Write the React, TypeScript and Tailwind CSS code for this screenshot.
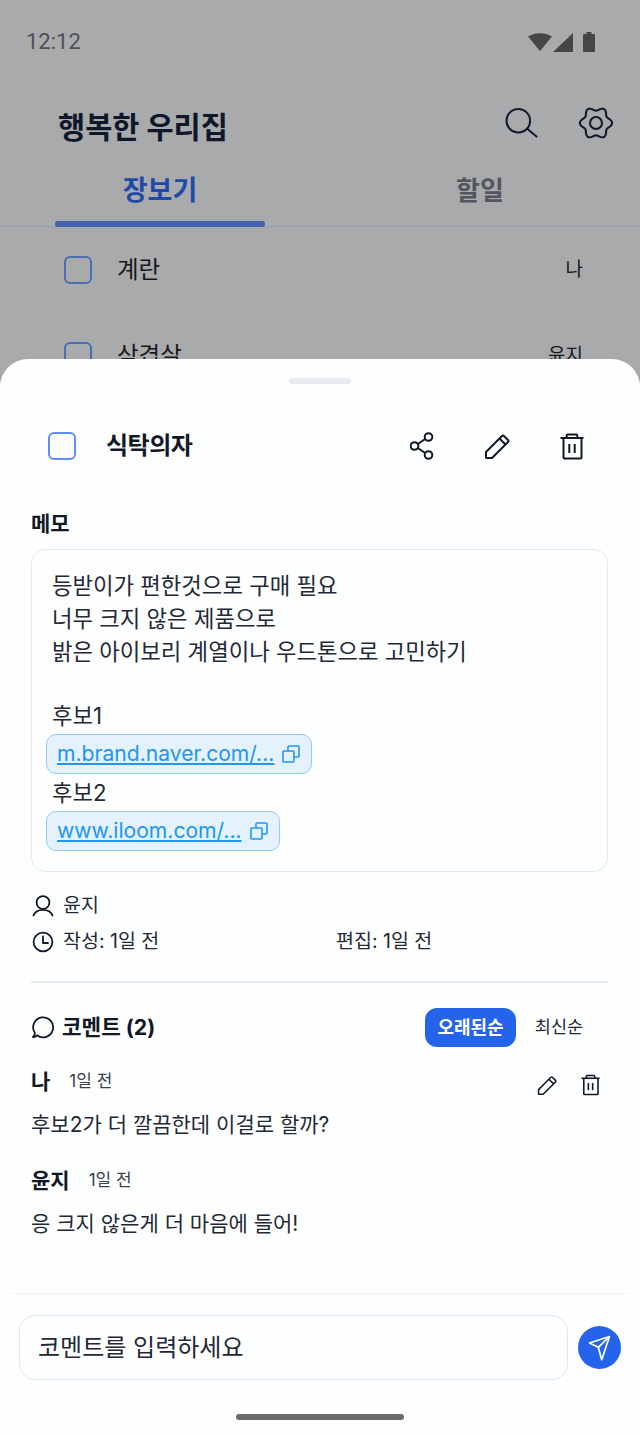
const font = "font-['Inter','Noto_Sans_CJK_KR',sans-serif]";

// six lobed outline of the settings gear
const gearPath = (() => {
  const pts: string[] = [];
  for (let i = 0; i < 96; i++) {
    const t = (i / 96) * Math.PI * 2;
    const r = 14.2 + 1.9 * Math.cos(6 * t);
    pts.push(`${(18 + r * Math.cos(t)).toFixed(2)} ${(18 + r * Math.sin(t)).toFixed(2)}`);
  }
  return `M${pts.join("L")}Z`;
})();

function SearchIcon() {
  return (
    <svg width="34" height="34" viewBox="0 0 34 34" fill="none" stroke="#0f172a" strokeWidth="2" strokeLinecap="round">
      <circle cx="13.3" cy="14.7" r="11.8" />
      <path d="M22.5 23 L31.5 30.5" />
    </svg>
  );
}

function GearIcon() {
  return (
    <svg width="36" height="36" viewBox="0 0 36 36" fill="none" stroke="#0f172a" strokeWidth="2">
      <path d={gearPath} strokeLinejoin="round" />
      <circle cx="18" cy="18" r="6" />
    </svg>
  );
}

function ShareIcon() {
  return (
    <svg width="24" height="28" viewBox="0 0 24 28" fill="none" stroke="#111827" strokeWidth="2">
      <circle cx="18.5" cy="5" r="3.8" />
      <circle cx="4.5" cy="14" r="3.8" />
      <circle cx="18.5" cy="23" r="3.8" />
      <path d="M7.8 12 L15.2 7 M7.8 16 L15.2 21" />
    </svg>
  );
}

function PencilIcon({ size = 26 }: { size?: number }) {
  return (
    <svg width={size} height={size} viewBox="0 0 26 26" fill="none" stroke="#111827" strokeWidth="2" strokeLinejoin="round">
      <path d="M2 25 V19 L18 3 Q19 2 20 3 L24 7 Q25 8 24 9 L8 25 Z" />
      <path d="M15.5 5.5 L21.5 11.5" />
    </svg>
  );
}

function TrashIcon({ width = 24, height = 27 }: { width?: number; height?: number }) {
  return (
    <svg width={width} height={height} viewBox="0 0 24 27" fill="none" stroke="#111827" strokeWidth="2">
      <path d="M0.5 5 H23.5" />
      <path d="M6.7 5 V2.5 Q6.7 1.5 7.7 1.5 H16.3 Q17.3 1.5 17.3 2.5 V5" />
      <path d="M3.5 5 V24.5 Q3.5 25.5 4.5 25.5 H20.5 Q21.5 25.5 21.5 24.5 V5" />
      <path d="M9.3 11 V20 M14.7 11 V20" />
    </svg>
  );
}

function CopyIcon() {
  return (
    <svg width="18" height="18" viewBox="0 0 18 18" fill="none" stroke="#2196f3" strokeWidth="1.6">
      <rect x="1" y="6" width="11" height="11" rx="1" />
      <path d="M6 6 V2 Q6 1 7 1 H16 Q17 1 17 2 V11 Q17 12 16 12 H12" />
    </svg>
  );
}

function UserIcon() {
  return (
    <svg width="22" height="22" viewBox="0 0 22 22" fill="none" stroke="#111827" strokeWidth="1.8" strokeLinecap="round">
      <circle cx="11" cy="7.5" r="6.4" />
      <path d="M1.5 20.5 C3 16.5 7 14.8 11 14.8 S19 16.5 20.5 20.5" />
    </svg>
  );
}

function ClockIcon() {
  return (
    <svg width="22" height="22" viewBox="0 0 22 22" fill="none" stroke="#111827" strokeWidth="1.8" strokeLinecap="round" strokeLinejoin="round">
      <circle cx="11" cy="11" r="9.4" />
      <path d="M11 5.5 V12 H16" />
    </svg>
  );
}

function ChatIcon() {
  return (
    <svg width="24" height="24" viewBox="0 0 24 24" fill="none" stroke="#111827" strokeWidth="1.8" strokeLinejoin="round">
      <path d="M6 20.2 A10 10 0 1 0 3.8 17.8 Q4 20 2 22 Q5 22.5 6 20.2 Z" />
    </svg>
  );
}

function SendIcon() {
  return (
    <svg width="26" height="28" viewBox="0 0 26 28" fill="none" stroke="#fff" strokeWidth="1.7" strokeLinejoin="round">
      <path d="M22.5 2.5 L2.5 9 L11.3 13.3 L14.7 25.7 Z" />
      <path d="M11.3 13.3 L22.5 2.5" />
    </svg>
  );
}

function LinkChip({ text }: { text: string }) {
  return (
    <div className="flex w-fit h-[40px] items-center gap-[8px] rounded-[10px] border-[1.5px] border-[#90caf9] bg-[#e3f2fd] pl-[10px] pr-[11px] -ml-[6px]">
      <span className="text-[21.1px] leading-[28px] text-[#2196f3] underline underline-offset-2">{text}</span>
      <CopyIcon />
    </div>
  );
}

function Comment({ name, text, actions }: { name: string; text: string; actions?: boolean }) {
  return (
    <div className="flex flex-col">
      <div className="flex items-center h-[28px]">
        <span className="text-[21px] font-semibold text-[#111827]">{name}</span>
        <span className="ml-[19px] text-[17px] text-[#374151]">1일 전</span>
        {actions && (
          <div className="ml-auto flex items-center gap-[24px] pr-[8px] mt-[6px] text-[#111827]">
            <PencilIcon size={20} />
            <TrashIcon width={19} height={22} />
          </div>
        )}
      </div>
      <p className="mt-[15px] text-[21px] leading-[28px] text-[#1f2937]">{text}</p>
    </div>
  );
}

export default function App() {
  return (
    <div className={`${font} relative w-[640px] h-[1436px] overflow-hidden bg-[#a9aaac] flex flex-col`}>
      {/* dimmed screen behind the sheet */}
      <div className="h-[359px] shrink-0 overflow-hidden">
        <div className="flex items-center justify-between h-[82px] pl-[26px] pr-[45px]">
          <span className="font-['Roboto',sans-serif] text-[22px] text-[#4f5052]">12:12</span>
          <div className="flex items-center mt-[2px]">
            <svg width="24" height="18" viewBox="0 0 24 18" fill="#454648"><path d="M0 3.5 C7 -1 17 -1 24 3.5 L12 18 Z" /></svg>
            <svg width="20" height="19" viewBox="0 0 20 19" fill="#454648" className="ml-[1px]"><path d="M20 0 V19 H0 Z" /></svg>
            <svg width="12" height="20" viewBox="0 0 12 20" fill="#454648" className="ml-[10px]"><path d="M3.5 0 H8.5 V2 H11 Q12 2 12 3 V19 Q12 20 11 20 H1 Q0 20 0 19 V3 Q0 2 1 2 H3.5 Z" /></svg>
          </div>
        </div>
        <div className="flex items-center justify-between h-[90px] pl-[58px] pr-[26px]">
          <h1 className="mt-[1px] text-[29.5px] font-bold text-[#0f172a]">행복한 우리집</h1>
          <div className="flex items-center gap-[39px] -mt-[8px]">
            <SearchIcon />
            <GearIcon />
          </div>
        </div>
        <div className="relative flex h-[55px] border-b border-[#9a9dab]">
          <div className="relative w-[320px] text-center">
            <span className="text-[27px] font-semibold leading-[38px] text-[#1e4bab]">장보기</span>
            <div className="absolute left-[55px] bottom-[-1px] w-[210px] h-[6px] rounded-full bg-[#4263ab]" />
          </div>
          <div className="w-[320px] text-center">
            <span className="text-[26px] font-semibold leading-[38px] text-[#53565e]">할일</span>
          </div>
        </div>
        <div className="flex items-center h-[85px] pl-[64px] pr-[57px]">
          <div className="w-[28px] h-[28px] rounded-[6px] border-2 border-[#4a6db5]" />
          <span className="ml-[25px] text-[23.5px] text-[#17181c]">계란</span>
          <span className="ml-auto mt-[2px] text-[19px] text-[#17181c]">나</span>
        </div>
        <div className="flex items-center h-[87px] pl-[64px] pr-[57px]">
          <div className="w-[28px] h-[28px] rounded-[6px] border-2 border-[#4a6db5]" />
          <span className="ml-[25px] text-[23.5px] text-[#17181c]">삼겹살</span>
          <span className="ml-auto mt-[2px] text-[19px] text-[#17181c]">윤지</span>
        </div>
      </div>

      {/* bottom sheet */}
      <div className="flex-1 flex flex-col bg-[#fdfefe] rounded-t-[28px]">
        <div className="self-center mt-[19px] w-[62px] h-[6px] rounded-full bg-[#e5e9f0]" />
        <div className="flex items-center h-[56px] mt-[34px] pl-[48px] pr-[56px]">
          <div className="w-[28px] h-[28px] rounded-[6px] border-2 border-[#5f8ef5]" />
          <h2 className="ml-[30px] text-[24px] font-bold tracking-[-0.5px] text-[#111827]">식탁의자</h2>
          <div className="ml-auto flex items-center gap-[50px]">
            <ShareIcon />
            <PencilIcon />
            <TrashIcon />
          </div>
        </div>

        <div className="pl-[31px] pr-[32px] mt-[36px]">
          <h3 className="text-[21px] font-semibold leading-[28px] text-[#111827]">메모</h3>
          <div className="mt-[11px] rounded-[14px] border border-[#e2e8f0] px-[20px] pt-[19px] h-[323px] text-[22.3px] leading-[33px] text-[#1f2937]">
            <p>등받이가 편한것으로 구매 필요</p>
            <p>너무 크지 않은 제품으로</p>
            <p>밝은 아이보리 계열이나 우드톤으로 고민하기</p>
            <p className="mt-[31px] mb-[2px]">후보1</p>
            <LinkChip text="m.brand.naver.com/..." />
            <p className="leading-[37px]">후보2</p>
            <LinkChip text="www.iloom.com/..." />
          </div>

          <div className="mt-[18px] text-[19.5px] text-[#1f2937]">
            <div className="flex items-center h-[32px] gap-[9px] pl-[1px]">
              <UserIcon />
              <span>윤지</span>
            </div>
            <div className="flex items-center h-[40px] gap-[9px] pl-[1px]">
              <ClockIcon />
              <span className="w-[264px]">작성: 1일 전</span>
              <span>편집: 1일 전</span>
            </div>
          </div>

          <div className="mt-[19px] h-[2px] bg-[#e5e9ee]" />

          <div className="flex items-center justify-between h-[40px] mt-[24px]">
            <div className="flex items-center gap-[7px]">
              <ChatIcon />
              <span className="mt-[1px] text-[21.3px] font-bold text-[#111827]">코멘트 (2)</span>
            </div>
            <div className="flex items-center pr-[6px]">
              <button className="w-[91px] h-[39px] rounded-[12px] bg-[#2563eb] text-[18px] font-semibold text-white">오래된순</button>
              <button className="w-[86px] h-[39px] text-[17.5px] text-[#1f2937]">최신순</button>
            </div>
          </div>

          <div className="mt-[21px] flex flex-col gap-[28px]">
            <Comment name="나" text="후보2가 더 깔끔한데 이걸로 할까?" actions />
            <Comment name="윤지" text="응 크지 않은게 더 마음에 들어!" />
          </div>
        </div>

        <div className="mt-auto mx-[12px] border-t border-[#eef1f5] h-[143px] flex flex-col">
          <div className="flex items-center gap-[10px] mt-[21px] pl-[7px] pr-[7px]">
            <div className="flex-1 h-[65px] flex items-center rounded-[16px] border border-[#dfe6f0] pl-[18px] pt-[1px] text-[24px] text-[#1f2937]">코멘트를 입력하세요</div>
            <div className="w-[43px] h-[43px] rounded-full bg-[#2563eb] flex items-center justify-center">
              <SendIcon />
            </div>
          </div>
          <div className="self-center mt-[34px] w-[168px] h-[6px] rounded-full bg-[#6b6c6e]" />
        </div>
      </div>
    </div>
  );
}
